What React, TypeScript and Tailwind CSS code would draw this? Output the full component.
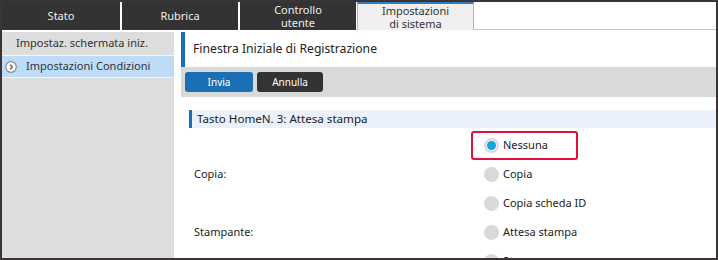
import React from "react";

const font = { fontFamily: '"Noto Sans", "Open Sans", sans-serif' };

function Radio({ checked, label }: { checked?: boolean; label: string }) {
  return (
    <div className="flex items-center gap-[4px]">
      <span className="w-[15px] h-[15px] rounded-full bg-[#d9d9d9] flex items-center justify-center">
        {checked && <span className="w-[9px] h-[9px] rounded-full bg-[#14a3dc] ring-1 ring-white/70" />}
      </span>
      <span className="text-[11px] text-[#222]">{label}</span>
    </div>
  );
}

export default function App() {
  return (
    <div className="w-[718px] h-[260px] bg-[#3a3434] p-[2px] overflow-hidden" style={font}>
      <div className="flex flex-col h-full bg-white overflow-hidden">
        {/* Tabs */}
        <div className="flex h-[28px] gap-[2px] bg-white text-[11px] shrink-0">
          <div className="w-[118px] bg-[#333] text-[#eee] flex items-center justify-center">Stato</div>
          <div className="w-[116px] bg-[#333] text-[#eee] flex items-center justify-center">Rubrica</div>
          <div className="w-[116px] bg-[#333] text-[#eee] text-center leading-[13px] pt-[1px]">
            Controllo
            <br />
            utente
          </div>
          <div className="w-[117px] -ml-[1px] bg-[#f0f0f0] text-[#333] border-t-2 border-t-[#2f7cc0] border-x border-x-[#b5b5b5] text-center leading-[13px]">
            Impostazioni
            <br />
            di sistema
          </div>
          <div className="flex-1 -ml-[2px] border-b border-[#c4c4c4]" />
        </div>

        {/* Body */}
        <div className="flex flex-1 mt-[2px] overflow-hidden">
          <div className="w-[172px] bg-[#dddddd] text-[11px] text-[#333] shrink-0">
            <div className="h-[24px] flex items-center pl-[14px] border-b border-[#f4f4f4]">Impostaz. schermata iniz.</div>
            <div className="h-[22px] flex items-center bg-[#bedcf8] border-b border-[#f4f4f4]">
              <svg width="12" height="12" viewBox="0 0 12 12" className="ml-[3px]">
                <circle cx="6" cy="6" r="5.3" fill="#fff" stroke="#8a8a8a" strokeWidth="1.2" />
                <path d="M5 3.6 L7.4 6 L5 8.4" fill="none" stroke="#777" strokeWidth="1.6" />
              </svg>
              <span className="ml-[9px]">Impostazioni Condizioni</span>
            </div>
          </div>

          <div className="flex-1 flex flex-col pl-[7px]">
            <div className="h-[35px] flex items-stretch shrink-0">
              <div className="w-[4px] bg-[#1a6fb5]" />
              <div className="flex items-center pl-[8px] text-[12.2px] text-[#222]">Finestra Iniziale di Registrazione</div>
            </div>
            <div className="h-[30px] bg-[#d9d9d9] flex items-center gap-[4px] pl-[4px] shrink-0">
              <button className="w-[68px] h-[20px] rounded-[3px] bg-[#1a6fb5] text-white text-[10px]">Invia</button>
              <button className="w-[66px] h-[20px] rounded-[3px] bg-[#333] text-white text-[10px]">Annulla</button>
            </div>

            <div className="mt-[13px] ml-[8px] h-[18px] bg-[#eaf1fb] flex items-stretch shrink-0">
              <div className="w-[3px] bg-[#1a6fb5]" />
              <div className="flex items-center pl-[5px] text-[11.6px] text-[#222]">Tasto HomeN. 3: Attesa stampa</div>
            </div>

            <div className="mt-[3px] grid grid-cols-[290px_1fr] auto-rows-[29px] text-[11px] text-[#222] shrink-0">
              <div />
              <div className="flex items-center">
                <div className="w-[107px] h-[29px] border-2 border-[#e2103c] rounded-[3px] flex items-center pl-[11px]">
                  <Radio checked label="Nessuna" />
                </div>
              </div>
              <div className="flex items-center pl-[13px]">Copia:</div>
              <div className="flex items-center pl-[13px]"><Radio label="Copia" /></div>
              <div />
              <div className="flex items-center pl-[13px]"><Radio label="Copia scheda ID" /></div>
              <div className="flex items-center pl-[13px]">Stampante:</div>
              <div className="flex items-center pl-[13px]"><Radio label="Attesa stampa" /></div>
              <div />
              <div className="flex items-center pl-[13px]"><Radio label="Stampa" /></div>
            </div>
          </div>
        </div>
      </div>
    </div>
  );
}
